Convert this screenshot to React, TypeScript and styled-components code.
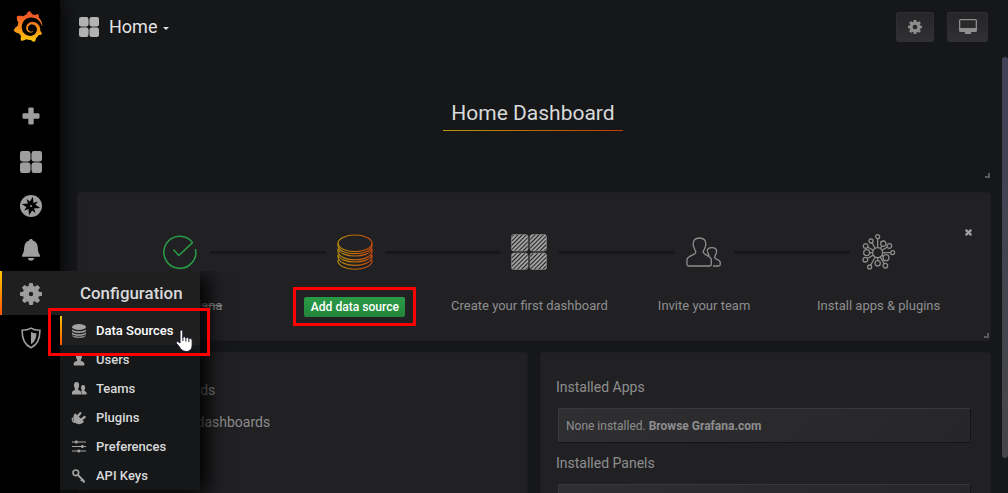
import React from "react";
import styled, { createGlobalStyle, css } from "styled-components";
import { SiGrafana } from "react-icons/si";

const GlobalStyle = createGlobalStyle`
  * { box-sizing: border-box; }
  html, body { margin: 0; padding: 0; background: #161719; overflow: hidden; }
  body { font-family: Roboto, "Liberation Sans", sans-serif; font-size: 13px; color: #8e8e8e; }
  svg { display: block; flex: none; }
`;

const Page = styled.div`
  position: relative;
  display: flex;
  width: 1008px;
  height: 493px;
  overflow: hidden;
  background: #161719;
`;

/* ---------- side menu ---------- */

const SideBar = styled.nav`
  position: relative;
  z-index: 2;
  display: flex;
  flex-direction: column;
  flex: none;
  width: 60px;
  background: #000;
  box-shadow: 0 0 20px #000;
`;

const LogoLink = styled.div`
  height: 95px;
  padding: 11px 0 0 13px;
`;

const SideItem = styled.div<{ $active?: boolean; $lift?: number }>`
  position: relative;
  display: flex;
  align-items: center;
  justify-content: center;
  height: 44px;
  padding: ${(p) => (p.$lift ? `0 0 ${p.$lift}px 2px` : "2px 0 0 2px")};
  color: #9e9e9e;
  ${(p) =>
    p.$active &&
    css`
      background: #1f1f20;
      &::before {
        content: "";
        position: absolute;
        inset: 0 auto 0 0;
        width: 2px;
        background: linear-gradient(#ffc800, #ff5400);
      }
    `}
`;

const FlyOut = styled.div`
  position: absolute;
  left: 60px;
  top: 0;
  width: 140px;
  height: 219px;
  background: #161719;
  box-shadow: 8px 4px 20px #000;
  clip-path: inset(0 -40px -40px 0);
`;

const FlyOutTitle = styled.div`
  height: 45px;
  padding-left: 20px;
  font-size: 16.9px;
  font-weight: 500;
  line-height: 44px;
  color: #d8d9da;
  background: #1f1f20;
`;

const FlyOutItem = styled.div<{ $selected?: boolean }>`
  position: relative;
  display: flex;
  align-items: center;
  height: 29px;
  padding-left: 11px;
  gap: 9px;
  font-weight: 500;
  color: ${(p) => (p.$selected ? "#fff" : "#d8d9da")};
  svg { color: #a3a3a3; }
  ${(p) =>
    p.$selected &&
    css`
      background: #1f1f20;
      &::before {
        content: "";
        position: absolute;
        inset: 0 auto 0 0;
        width: 2px;
        background: linear-gradient(#ffc800, #ff5400);
      }
    `}
`;

/* ---------- main column ---------- */

const Main = styled.main`
  display: flex;
  flex-direction: column;
  width: 948px;
  padding: 0 17px;
`;

const NavBar = styled.header`
  display: flex;
  align-items: center;
  height: 53px;
  flex: none;
  padding: 0 3px 0 2px;
`;

const NavTitle = styled.div`
  display: flex;
  align-items: center;
  flex: 1;
  gap: 10px;
  font-size: 18px;
  color: #e3e3e3;
`;

const Caret = styled.span`
  margin: 4px 0 0 -4px;
  border: 3.5px solid transparent;
  border-top-color: #e3e3e3;
  border-bottom: 0;
`;

const NavButton = styled.div<{ $width: number }>`
  display: flex;
  align-items: center;
  justify-content: center;
  width: ${(p) => p.$width}px;
  height: 30px;
  margin-left: 13px;
  border: 1px solid #2f2f32;
  border-radius: 2px;
  background: linear-gradient(#262628, #303032);
  color: #8e8e8e;
`;

const Corner = styled.i`
  position: absolute;
  right: 1px;
  bottom: 2px;
  width: 5px;
  height: 5px;
  border: solid #5a5a5b;
  border-width: 0 2px 2px 0;
`;

const TitlePanel = styled.section`
  position: relative;
  display: flex;
  justify-content: center;
  align-items: flex-start;
  height: 127px;
  flex: none;
  padding: 43px 3px 0 0;
`;

const DashboardTitle = styled.h1`
  margin: 0;
  width: 180px;
  height: 35px;
  padding-left: 1px;
  font-size: 21px;
  font-weight: 400;
  line-height: 34px;
  text-align: center;
  white-space: nowrap;
  color: #d8d9da;
  border-bottom: 1px solid;
  border-image: linear-gradient(to right, #b59a0c, #c03a05) 1;
`;

const Panel = styled.section`
  position: relative;
  background: #212124;
  border: 1px solid #1e1e20;
  border-radius: 3px;
`;

const Steps = styled(Panel)`
  display: flex;
  height: 149px;
  flex: none;
  margin: 12px 0 11px;
  padding: 41px 24px 0 15px;
`;

const Step = styled.div`
  position: relative;
  display: flex;
  flex-direction: column;
  align-items: center;
  flex: 1;
  &:not(:nth-child(5))::after {
    content: "";
    position: absolute;
    left: calc(50% + 30px);
    right: calc(-50% + 29px);
    top: 17px;
    height: 3px;
    background: #161719;
  }
`;

const StepIcon = styled.div`
  display: flex;
  align-items: center;
  justify-content: center;
  height: 36px;
`;

const StepLabel = styled.div<{ $done?: boolean }>`
  margin-top: 28px;
  line-height: 16px;
  white-space: nowrap;
  text-decoration: ${(p) => (p.$done ? "line-through" : "none")};
`;

const StepAction = styled.div`
  position: relative;
  width: 101px;
  height: 20px;
  margin-top: 27px;
  border-radius: 2px;
  background: linear-gradient(#299c46, #23843b);
  color: #fff;
  font-size: 12.1px;
  font-weight: 500;
  line-height: 20px;
  text-align: center;
  white-space: nowrap;
`;

const Highlight = styled.div<{ $x: number; $y: number; $w: number; $h: number }>`
  position: absolute;
  z-index: 4;
  left: ${(p) => p.$x}px;
  top: ${(p) => p.$y}px;
  width: ${(p) => p.$w}px;
  height: ${(p) => p.$h}px;
  border: 3px solid #f00;
`;

const Pointer = styled.svg`
  position: absolute;
  z-index: 5;
  left: 175px;
  top: 58px;
`;

const Dismiss = styled.svg`
  position: absolute;
  right: 18px;
  top: 36px;
`;

const Columns = styled.div`
  display: grid;
  grid-template-columns: 451px 451px;
  gap: 12px;
  height: 160px;
`;

const ListPanel = styled(Panel)<{ $top: number }>`
  padding: ${(p) => p.$top}px 15px 0;
  font-size: 14px;
`;

const Heading = styled.div<{ $height: number }>`
  height: ${(p) => p.$height}px;
  line-height: 24px;
`;

const PluginBox = styled.div`
  width: 413px;
  height: 35px;
  margin: 0 0 8px 2px;
  padding-left: 7px;
  border: 1px solid;
  border-color: #39393b #151517 #151517 #39393b;
  border-radius: 2px;
  background: linear-gradient(135deg, #2f2f32, #262628);
  font-size: 12px;
  line-height: 34px;
  b { font-weight: 700; }
`;

const ScrollThumb = styled.div`
  position: absolute;
  right: 0;
  top: 57px;
  width: 6px;
  height: 401px;
  border-radius: 3px;
  background: linear-gradient(#404057, #464648);
`;

/* ---------- icons ---------- */

const COG =
  "M1024 896q0-106-75-181t-181-75-181 75-75 181 75 181 181 75 181-75 75-181zm512-109v222q0 12-8 23t-20 13l-185 28q-19 54-39 91 35 50 107 138 10 12 10 25t-9 23q-27 37-99 108t-94 71q-12 0-26-9l-138-108q-44 23-91 38-16 136-29 186-7 28-36 28h-222q-14 0-24.5-8.5t-11.5-21.5l-28-184q-49-16-90-37l-141 107q-10 9-25 9-14 0-25-11-126-114-165-168-7-10-7-23 0-12 8-23 15-21 51-66.5t54-70.5q-27-50-41-99l-183-27q-13-2-21-12.5t-8-23.5v-222q0-12 8-23t19-13l186-28q14-46 39-92-40-57-107-138-10-12-10-24 0-10 9-23 26-36 98.5-107.5t94.5-71.5q13 0 26 10l138 107q44-23 91-38 16-136 29-186 7-28 36-28h222q14 0 24.5 8.5t11.5 21.5l28 184q49 16 90 37l142-107q9-9 24-9 13 0 25 10 129 119 165 170 7 8 7 22 0 12-8 23-15 21-51 66.5t-54 70.5q26 50 41 98l183 28q13 2 21 12.5t8 23.5z";

const Cog = ({ size }: { size: number }) => (
  <svg width={size} height={size} viewBox="0 128 1536 1536" fill="currentColor">
    <path d={COG} />
  </svg>
);

/* gear with eight short square teeth and a small hub */
const SideGear = () => (
  <svg width="22" height="22" viewBox="-11 -11 22 22" fill="none">
    <circle r="5.2" stroke="currentColor" strokeWidth="6" />
    {[0, 45, 90, 135, 180, 225, 270, 315].map((a) => (
      <path key={a} d="M-2.6 -7.5 L-1.7 -11 H1.7 L2.6 -7.5Z" fill="currentColor" transform={`rotate(${a})`} />
    ))}
  </svg>
);

const Tiles = ({ size, color = "currentColor" }: { size: number; color?: string }) => (
  <svg width={size} height={size} viewBox="0 0 22 22" fill={color}>
    {[[0, 0], [11.6, 0], [0, 11.6], [11.6, 11.6]].map(([x, y]) => (
      <rect key={`${x}-${y}`} x={x} y={y} width="10.4" height="10.4" rx="2.2" />
    ))}
    <path d="M3 10.2h5v1.6H3zM14 10.2h5v1.6h-5zM10.2 3h1.6v5h-1.6zM10.2 14h1.6v5h-1.6z" opacity=".35" />
  </svg>
);

const Plus = () => (
  <svg width="18" height="18" viewBox="0 0 18 18" fill="currentColor">
    <rect x="6.3" y="0.5" width="5.4" height="17" rx="1.3" />
    <rect x="0.5" y="6.3" width="17" height="5.4" rx="1.3" />
  </svg>
);

const Compass = () => (
  <svg width="22" height="22" viewBox="-11 -11 22 22">
    <circle r="11" fill="currentColor" />
    <g transform="rotate(12)" fill="#000">
      <path d="M0 -9.500L1.900 -2.900L9.500 0L2.900 1.900L0 9.500L-1.900 2.900L-9.500 0L-2.900 -1.900Z" />
      <path d="M5.800 -5.800L2.900 .6L5.800 5.800L-.6 2.900L-5.800 5.800L-2.900 -.6L-5.800 -5.800L.6 -2.900Z" />
    </g>
    <circle r="1" fill="currentColor" />
  </svg>
);

const Bell = () => (
  <svg width="18" height="22" viewBox="0 0 18 22" fill="currentColor">
    <path d="M9 0c1.1 0 1.8.7 1.9 1.6C14 2.4 15.6 5 15.8 8.500c.2 3.700.7 5.700 2.100 7.400V17.700H.1V15.900C1.500 14.200 2 12.200 2.200 8.500 2.400 5 4 2.400 7.100 1.600 7.200.7 7.900 0 9 0z" />
    <path d="M5.800 19h6.400c-.3 1.700-1.600 2.700-3.200 2.700S6.100 20.700 5.800 19z" />
  </svg>
);

const Shield = () => (
  <svg width="20" height="22" viewBox="0 0 20 22">
    <path d="M10 1.100C7.500 2.700 4.500 3.200 1.100 3.200C1 11.500 3.200 17.500 10 20.700C16.800 17.500 19 11.500 18.900 3.200C15.500 3.200 12.500 2.700 10 1.100Z" fill="none" stroke="currentColor" strokeWidth="1.6" />
    <path d="M10 5C11.800 5.900 13.300 6.200 15.500 6.300C15.300 11 14 14.800 10 17.300Z" fill="currentColor" />
  </svg>
);

const Monitor = () => (
  <svg width="18" height="15" viewBox="0 0 18 15" fill="currentColor">
    <path fillRule="evenodd" d="M1.500 0h15A1.500 1.500 0 0 1 18 1.500v10a1.500 1.500 0 0 1-1.500 1.500H12v1l.5 1h-7l.5-1v-1H1.500A1.500 1.500 0 0 1 0 11.500v-10A1.500 1.500 0 0 1 1.500 0zM1.300 1.200v7.800h15.400V1.200z" />
  </svg>
);

const DbSolid = () => (
  <svg width="16" height="14" viewBox="0 0 16 14">
    <ellipse cx="8" cy="3" rx="7.100" ry="2.900" fill="currentColor" />
    <path d="M1 5.200C2.500 8 13.500 8 15 5.200V7C13.500 9.500 2.500 9.500 1 7ZM1 8.200C2.500 11 13.500 11 15 8.200V9.900C13.500 12.300 2.500 12.300 1 9.900ZM1 11C2.500 13.300 13.500 13.300 15 11C14.600 14.800 1.400 14.800 1 11Z" fill="currentColor" />
  </svg>
);

const PERSON =
  "M6 0C8.300 0 9.200 1.600 9 3.700C8.900 5.300 8 6.300 7.700 7.300C7.800 8.300 11 8.700 11.300 10.200V12.500H.7V10.200C1 8.700 4.200 8.300 4.300 7.300C4 6.300 3.100 5.300 3 3.700C2.800 1.600 3.700 0 6 0Z";

const User = () => (
  <svg width="16" height="13" viewBox="-2 0 16 13" fill="currentColor">
    <path d={PERSON} />
  </svg>
);

const Users = () => (
  <svg width="16" height="13" viewBox="0 0 16 13" fill="currentColor">
    <path d={PERSON} transform="translate(8 3.100) scale(.68 .75)" />
    <path d={PERSON} transform="translate(.4 0) scale(.86 1)" stroke="#161719" strokeWidth="1" paintOrder="stroke" />
  </svg>
);

const Plug = () => (
  <svg width="16" height="14" viewBox="0 0 16 14">
    <path d="M4.200 2.200L13 10.600C10.500 13.800 6.500 13.800 4.200 11.600C1.800 9.200 1.600 5 4.200 2.200Z" fill="currentColor" />
    <path d="M7.200 4.800L9.300 2.200M10.700 8.300L13.600 6" stroke="currentColor" strokeWidth="2.300" strokeLinecap="round" />
    <path d="M4.500 11.500C2 11.500 .9 9.300 1.600 6.800" stroke="currentColor" strokeWidth="1.400" fill="none" />
  </svg>
);

const Sliders = () => (
  <svg width="16" height="13" viewBox="0 0 16 13" fill="currentColor">
    <path d="M1 1.500h14v1.100H1zM1 6h14v1.100H1zM1 10.500h14v1.100H1z" />
    <rect x="4" y=".5" width="2.600" height="3.100" rx="1" />
    <rect x="10" y="5" width="2.600" height="3.100" rx="1" />
    <rect x="6.500" y="9.500" width="2.600" height="3.100" rx="1" />
  </svg>
);

const Key = () => (
  <svg width="16" height="14" viewBox="0 0 16 14" fill="none" stroke="currentColor">
    <circle cx="4.800" cy="3.800" r="2.800" strokeWidth="1.700" />
    <path d="M6.900 5.900L13 12.500" strokeWidth="2" strokeLinecap="round" />
    <path d="M9.900 12L12 9.800M12 13.400L13.500 12" strokeWidth="1.700" />
  </svg>
);

const CheckCircle = () => (
  <svg width="34" height="34" viewBox="0 0 34 34" fill="none" stroke="#299c46" strokeWidth="1.500">
    <path d="M29.600 7.600A16 16 0 1 0 32.500 14" />
    <path d="M10.500 14.500L15.800 20.500L29.800 7.400" />
  </svg>
);

const DbOutline = () => (
  <svg width="36" height="36" viewBox="0 0 36 36" fill="none" stroke="url(#amber)" strokeWidth="1.200">
    <defs>
      <linearGradient id="amber" gradientUnits="userSpaceOnUse" x1="0" y1="0" x2="36" y2="0">
        <stop offset="0" stopColor="#b58d0b" />
        <stop offset="1" stopColor="#c8480b" />
      </linearGradient>
    </defs>
    <ellipse cx="18" cy="9.300" rx="17" ry="8.300" />
    <path d="M1 9.300V11.800C2 22.300 34 22.300 35 11.800V9.300" />
    <path d="M1 14.500V18C3 28.500 33 28.500 35 18V14.500C33 24.500 3 24.500 1 14.500Z" />
    <path d="M1 20.500V23.500C3 34 33 34 35 23.500V20.500C33 30.500 3 30.500 1 20.500Z" />
    <path d="M1 26V27.500C3 37.800 33 37.800 35 27.500V26" />
  </svg>
);

const HatchedTiles = () => (
  <svg width="36" height="36" viewBox="0 0 36 36">
    <defs>
      <pattern id="hatch" width="3" height="3" patternUnits="userSpaceOnUse" patternTransform="rotate(-45)">
        <rect width="3" height="2" fill="#a0a0a0" />
      </pattern>
    </defs>
    {[[0.4, 0.4], [19, 0.4], [0.4, 19], [19, 19]].map(([x, y]) => (
      <rect key={`${x}-${y}`} x={x} y={y} width="16.600" height="16.600" rx="2.500" fill="url(#hatch)" stroke="#8e8e8e" strokeWidth=".6" />
    ))}
  </svg>
);

const TeamOutline = () => (
  <svg width="36" height="30" viewBox="0 0 36 30" fill="none" stroke="#8e8e8e" strokeWidth="1.300">
    <path d="M13.500 1C18 1 20 3.500 19.800 7.500C19.700 10.500 18 12.500 17.200 14.500C16.500 18.200 24.800 18.500 25.300 22.500V27Q25.300 29 23.300 29H3Q1 29 1 27V22.500C1.800 18.500 10.300 18.200 9.800 14.500C9 12.500 7.300 10.500 7.200 7.500C7 3.500 9 1 13.500 1Z" />
    <path d="M21.500 14.500C20.800 12 22.500 10.700 25.800 10.700C29.500 10.700 31 12.500 30.500 15.500C30.200 17.500 28.800 18.500 28.600 20.500C28.800 22.500 33.500 22.300 34.200 25V27.500Q34.200 29 32.700 29H27" />
    <path d="M21.500 14.500C21.800 16.500 23 17.500 23 19" />
  </svg>
);

const HUB_NODES = [
  [0, -48, 6], [-20, -35, 6], [-36, -20, 7], [-33, 0, 9], [-37, 21, 7], [-24, 43, 6],
  [0, 32, 8], [23, 39, 7], [25, 15, 9], [45, 0, 6], [35, -20, 7], [17, -27, 8],
];

const Hub = () => (
  <svg width="34" height="36" viewBox="-47 -56 102 108" stroke="#8e8e8e" strokeWidth="3.800">
    {HUB_NODES.map(([x, y], i) => (
      <path key={i} d={`M0 0L${x} ${y}`} />
    ))}
    <circle r="15" fill="#212124" />
    {HUB_NODES.map(([x, y, r], i) => (
      <circle key={i} cx={x} cy={y} r={r} fill="#212124" />
    ))}
  </svg>
);

/* ---------- page ---------- */

const MENU: { label: string; icon: React.ReactNode }[] = [
  { label: "Data Sources", icon: <DbSolid /> },
  { label: "Users", icon: <User /> },
  { label: "Teams", icon: <Users /> },
  { label: "Plugins", icon: <Plug /> },
  { label: "Preferences", icon: <Sliders /> },
  { label: "API Keys", icon: <Key /> },
];

export default function App() {
  return (
    <Page>
      <GlobalStyle />
      <SideBar>
        <LogoLink>
          <svg width="30" height="31" viewBox="0 0 30 31">
            <defs>
              <linearGradient id="logo" x1="0" y1="0" x2="0" y2="1">
                <stop offset="0.15" stopColor="#f05a28" />
                <stop offset="1" stopColor="#fbca0a" />
              </linearGradient>
            </defs>
            <SiGrafana size={31} x={-0.5} y={0} fill="url(#logo)" color="#f58220" />
          </svg>
        </LogoLink>
        <SideItem $lift={2}><Plus /></SideItem>
        <SideItem><Tiles size={22} /></SideItem>
        <SideItem><Compass /></SideItem>
        <SideItem><Bell /></SideItem>
        <SideItem $active>
          <SideGear />
          <FlyOut>
            <FlyOutTitle>Configuration</FlyOutTitle>
            {MENU.map((m, i) => (
              <FlyOutItem key={m.label} $selected={i === 0}>
                {m.icon}
                {m.label}
              </FlyOutItem>
            ))}
          </FlyOut>
          <Highlight $x={48} $y={37} $w={162} $h={48} />
          <Pointer width="19" height="24" viewBox="0 0 19 24">
            <path d="M5.200 1.200C6.500 .6 7.700 1.300 7.800 2.700V8.500C8 7.500 10.500 7.400 10.800 9C11.300 8 13.500 8.200 13.800 9.800C14.500 9 17 9.200 17.200 11.500V16C17 19.500 15.500 22.500 11.500 22.500C7.500 22.500 5.500 20 4.300 17.800L1.300 14.200C.8 12.700 2.500 11.500 5 14V2Z" fill="#fff" stroke="#15152a" strokeWidth="1" />
            <path d="M7.900 8V12M10.900 9V12.500M13.900 10V13" stroke="#15152a" strokeWidth="1" />
          </Pointer>
        </SideItem>
        <SideItem><Shield /></SideItem>
      </SideBar>

      <Main>
        <NavBar>
          <NavTitle>
            <Tiles size={20} color="#b3b3b3" />
            Home
            <Caret />
          </NavTitle>
          <NavButton $width={38}><Cog size={14} /></NavButton>
          <NavButton $width={41}><Monitor /></NavButton>
        </NavBar>

        <TitlePanel>
          <DashboardTitle>Home Dashboard</DashboardTitle>
          <Corner />
        </TitlePanel>

        <Steps>
          <Step>
            <StepIcon><CheckCircle /></StepIcon>
            <StepLabel $done>Install Grafana</StepLabel>
          </Step>
          <Step>
            <StepIcon><DbOutline /></StepIcon>
            <StepAction>
              Add data source
              <Highlight $x={-11} $y={-10} $w={123} $h={39} />
            </StepAction>
          </Step>
          <Step>
            <StepIcon><HatchedTiles /></StepIcon>
            <StepLabel>Create your first dashboard</StepLabel>
          </Step>
          <Step>
            <StepIcon><TeamOutline /></StepIcon>
            <StepLabel>Invite your team</StepLabel>
          </Step>
          <Step>
            <StepIcon><Hub /></StepIcon>
            <StepLabel>Install apps &amp; plugins</StepLabel>
          </Step>
          <Dismiss width="7" height="7" viewBox="0 0 7 7" stroke="#a0a0a0" strokeWidth="2.300">
            <path d="M.7 .7L6.300 6.300M6.300 .7L.7 6.300" />
          </Dismiss>
          <Corner />
        </Steps>

        <Columns>
          <ListPanel $top={25}>
            <Heading $height={32}>Starred dashboards</Heading>
            <Heading $height={32}>Recently viewed dashboards</Heading>
          </ListPanel>
          <ListPanel $top={22}>
            <Heading $height={33}>Installed Apps</Heading>
            <PluginBox>
              None installed. <b>Browse Grafana.com</b>
            </PluginBox>
            <Heading $height={33}>Installed Panels</Heading>
            <PluginBox />
          </ListPanel>
        </Columns>
      </Main>
      <ScrollThumb />
    </Page>
  );
}
